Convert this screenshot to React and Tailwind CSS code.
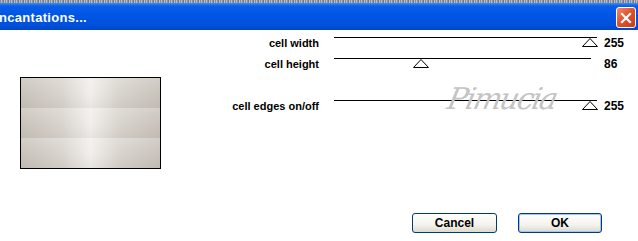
const TAHOMA = "font-['Liberation_Sans','DejaVu_Sans',sans-serif]";

function Thumb({ left }) {
  return (
    <svg
      className="absolute top-[1px]"
      style={{ left }}
      width="16"
      height="9"
      viewBox="0 0 16 9"
    >
      <polygon points="8,0.5 15.5,8.5 0.5,8.5" fill="white" stroke="black" strokeWidth="1" />
    </svg>
  );
}

function SliderRow({ label, value, thumb, lineWidth = 263, className = "" }) {
  return (
    <div className={`flex items-start h-[21px] ${className}`}>
      <div className="w-[150px] text-right text-[11px] leading-[13px] font-bold text-black pr-[1px]">
        {label}
      </div>
      <div className="ml-[14px] w-[263px] relative h-[12px]">
        <div className="h-px bg-black" style={{ width: lineWidth }} />
        {thumb !== null && <Thumb left={thumb} />}
      </div>
      <div className="ml-[7px] text-[12px] leading-[13px] font-bold text-black">{value}</div>
    </div>
  );
}

function Band() {
  return (
    <div className="h-[30px] bg-[linear-gradient(to_right,#c8c2ba,#d9d4ce_30%,#f1efec_50%,#d9d4ce_70%,#c8c2ba)] relative">
      <div className="absolute inset-0 bg-[linear-gradient(to_bottom,rgba(255,255,255,0.2),rgba(255,255,255,0)_55%,rgba(60,40,20,0.05))]" />
    </div>
  );
}

export default function App() {
  return (
    <div className={`w-[638px] h-[241px] bg-white overflow-hidden relative ${TAHOMA}`}>
      <div className="h-[3px] bg-[repeating-linear-gradient(to_right,#6b7280_0px,#d1d5db_2px,#4b5563_3px,#e5e7eb_5px)]" />
      <div className="h-[27px] flex items-center justify-between bg-[linear-gradient(to_bottom,#3a8cf5_0px,#0a5fe8_3px,#0055e5_12px,#0050dc_22px,#0046c8_27px)]">
        <span className="text-white font-bold text-[13px] leading-none -ml-[1px] mt-[2px] tracking-[0.3px]">
          ncantations...
        </span>
        <div className="w-[20px] h-[21px] mr-[2px] mt-[2px] rounded-[3px] border border-white bg-[linear-gradient(135deg,#f08a68,#e05530_45%,#c83a16)] flex items-center justify-center">
          <svg width="12" height="12" viewBox="0 0 12 12">
            <path d="M2 2 L10 10 M10 2 L2 10" stroke="white" strokeWidth="2.2" strokeLinecap="square" />
          </svg>
        </div>
      </div>

      <div className="flex">
        <div className="w-[170px] pl-[20px] pt-[47px]">
          <div className="w-[141px] border border-black">
            <Band />
            <Band />
            <Band />
          </div>
        </div>
        <div className="pt-[7px]">
          <SliderRow label="cell width" value="255" thumb={248} />
          <SliderRow label="cell height" value="86" thumb={79} lineWidth={257} />
          <SliderRow label="cell edges on/off" value="255" thumb={248} className="mt-[21px]" />
        </div>
      </div>

      <div className="absolute left-[448px] top-[84px] text-[30px] italic text-[#c4c4c4] font-['DejaVu_Serif',serif] font-extralight leading-none tracking-[-2px] -skew-x-12 pointer-events-none">
        Pimucia
      </div>

      <div className="absolute left-0 right-0 top-[213px] flex justify-end pr-[36px] gap-[21px]">
        <button className="w-[85px] h-[20px] rounded-[3px] border border-[#003c74] bg-[linear-gradient(to_bottom,#ffffff,#f4f3ee_60%,#dcd9cd)] text-[12px] font-bold text-black leading-none">
          Cancel
        </button>
        <button className="w-[84px] h-[20px] rounded-[3px] border border-[#003c74] bg-[linear-gradient(to_bottom,#ffffff,#f4f3ee_60%,#dcd9cd)] shadow-[inset_0_0_0_1px_#a6c4f2] text-[12px] font-bold text-black leading-none">
          OK
        </button>
      </div>
    </div>
  );
}
